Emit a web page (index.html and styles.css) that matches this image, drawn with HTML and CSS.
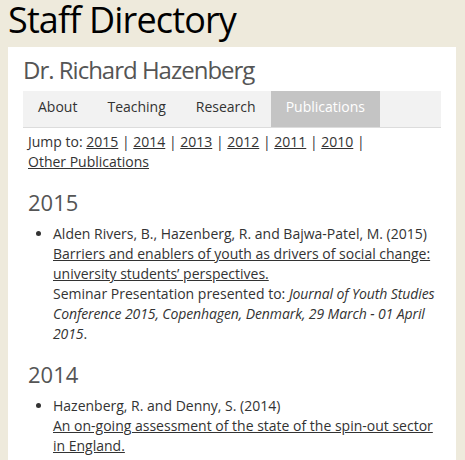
FILE: index.html
```html
<!DOCTYPE html>
<html lang="en">
<head>
<meta charset="utf-8">
<title>Staff Directory</title>
<link rel="stylesheet" href="styles.css">
</head>
<body>
<h1 class="page-title">Staff Directory</h1>
<div class="panel">
  <h2 class="person-name">Dr. Richard Hazenberg</h2>
  <ul class="tabs">
    <li class="tab">About</li>
    <li class="tab">Teaching</li>
    <li class="tab">Research</li>
    <li class="tab tab-active">Publications</li>
  </ul>
  <div class="tab-content">
    <p class="jump">Jump to: <a href="#y2015">2015</a> | <a href="#y2014">2014</a> | <a href="#y2013">2013</a> | <a href="#y2012">2012</a> | <a href="#y2011">2011</a> | <a href="#y2010">2010</a> |<br><a href="#other">Other Publications</a></p>

    <h3 class="year" id="y2015">2015</h3>
    <ul class="pubs">
      <li>Alden Rivers, B., Hazenberg, R. and Bajwa-Patel, M. (2015)<br>
        <a href="#">Barriers and enablers of youth as drivers of social change: university students’ perspectives.</a><br>
        Seminar Presentation presented to: <em>Journal of Youth Studies Conference 2015, Copenhagen, Denmark, 29 March - 01 April 2015</em>.</li>
    </ul>

    <h3 class="year" id="y2014">2014</h3>
    <ul class="pubs">
      <li>Hazenberg, R. and Denny, S. (2014)<br>
        <a href="#">An on-going assessment of the state of the spin-out sector in England.</a><br>
        Research Report commissioned by: the Cabinet Office and Department of Health for Public Services.</li>
    </ul>
  </div>
</div>
</body>
</html>
```

FILE: styles.css
```css
html, body {
  margin: 0;
  padding: 0;
}
body {
  background: #eeeadc;
  font-family: "Open Sans", "DejaVu Sans", sans-serif;
  color: #333;
  font-size: 14px;
  line-height: 20px;
}
.page-title {
  margin: 0 8px 7px;
  font-size: 36px;
  line-height: 40px;
  font-weight: 400;
  letter-spacing: -0.85px;
  color: #000;
}
.panel {
  background: #fff;
  margin: 0 9px 0 8px;
  padding: 8px 15px 20px;
}
.person-name {
  margin: 0 0 6px;
  font-size: 24px;
  line-height: 30px;
  font-weight: 400;
  letter-spacing: -1px;
  color: #555;
}
.tabs {
  list-style: none;
  margin: 0;
  padding: 0;
  display: flex;
  background: #f2f2f2;
  border-bottom: 1px solid #dcdcdc;
}
.tab {
  padding: 6px 15px 10px;
  color: #333;
}
.tab-active {
  background: #c4c4c4;
  color: #fff;
}
.tab-content {
  padding: 0 0 0 5px;
}
.jump {
  margin: 4px 0 0;
}
a {
  color: #333;
  text-decoration: underline;
}
.year {
  margin: 18px 0 10px;
  font-size: 22px;
  line-height: 24px;
  font-weight: 400;
  color: #555;
}
.pubs {
  margin: 0;
  padding-left: 25px;
}
.pubs em {
  font-style: italic;
  letter-spacing: -0.1px;
}
```
